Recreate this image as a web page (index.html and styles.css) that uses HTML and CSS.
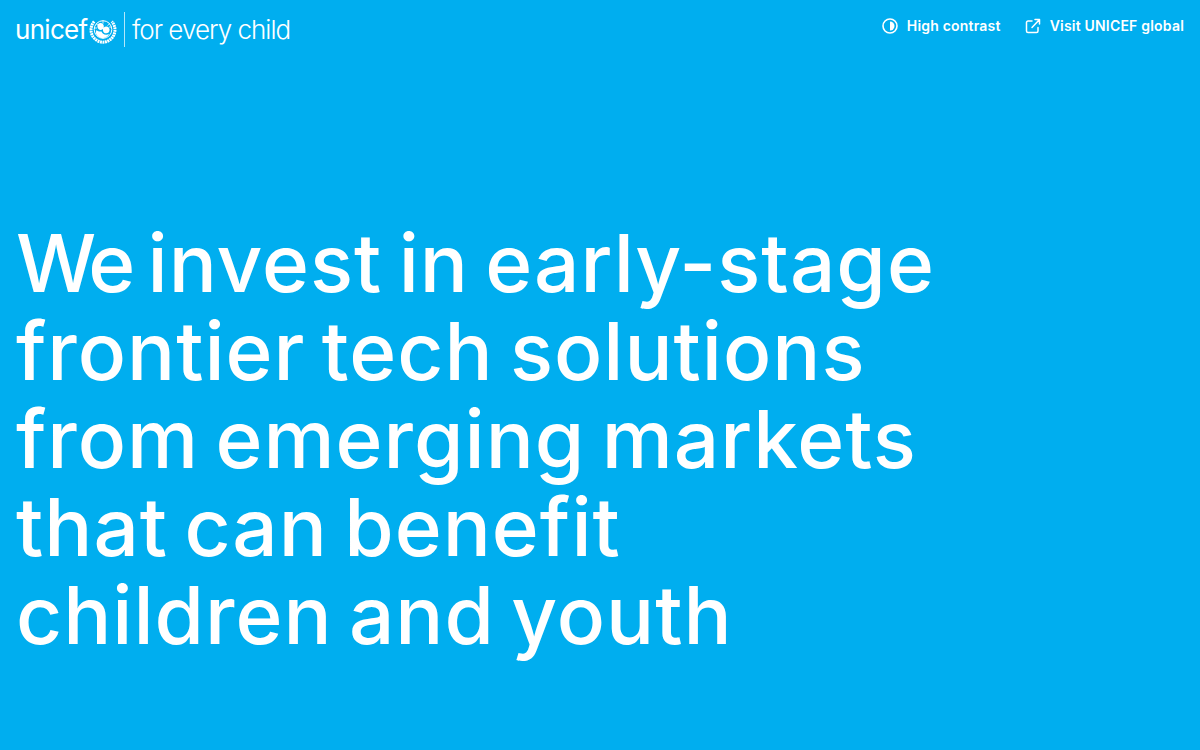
FILE: index.html
```html
<!DOCTYPE html>
<html lang="en">
<head>
<meta charset="utf-8">
<title>UNICEF Venture Fund</title>
<link rel="stylesheet" href="styles.css">
</head>
<body>
<header class="top">
  <a class="logo" href="#">
    <span class="wordmark">unicef</span>
    <svg class="emblem" viewBox="0 0 28 28" width="28" height="28" fill="none" stroke="#fff">
      <circle cx="14" cy="13.500" r="8.800" stroke-width="1"/>
      <path d="M14 4.700v3M14 20v2.500M5.500 12h2.500M20 11h2.500M7 7.500l2.500 2M21 7.500l-2.500 2" stroke-width=".8"/>
      <path d="M11.300 7c2.500 0 3.800 1.800 3.500 3.900-.3 2-1.900 3.200-3.600 3-1.800-.2-3-2-2.800-3.800.2-1.800 1.400-3.100 2.900-3.100zM17.200 10.500c2.100 0 3.500 1.600 3.400 3.500-.1 2-1.600 3.300-3.400 3.300s-3.300-1.400-3.300-3.400c0-1.900 1.400-3.400 3.300-3.400zM7.500 14c1.500 1.300 3.200 1.800 5 1.400.6 1.900 2.200 3.200 4.800 3.300 1 0 2-.2 2.800-.6-1.300 2.500-3.800 4-6.500 4-3.300 0-6-2.300-6.800-5.500z" fill="#fff" stroke="none"/>
      <path d="M5.200 5.500C1.200 9.800 1 16.800 4.500 21.300c2.300 3 5.900 4.900 9.500 4.900s7.200-1.900 9.500-4.900c3.500-4.500 3.300-11.500-.7-15.800" stroke-width="3" stroke-dasharray="1.900 .6"/>
    </svg>
    <span class="divider"></span>
    <span class="tagline">for every child</span>
  </a>
  <nav class="links">
    <a class="link" href="#">
      <svg viewBox="0 0 16 16" width="16" height="16"><circle cx="8" cy="8" r="7" fill="none" stroke="#fff" stroke-width="1.600"/><path d="M8 3.500a4.500 4.500 0 0 1 0 9z" fill="#fff"/></svg>
      High contrast
    </a>
    <a class="link" href="#">
      <svg viewBox="0 0 16 16" width="16" height="16" fill="none" stroke="#fff" stroke-width="1.500" stroke-linecap="round" stroke-linejoin="round"><path d="M7 3H3a1.500 1.500 0 0 0-1.500 1.500v8.500A1.500 1.500 0 0 0 3 14.500h8.500A1.500 1.500 0 0 0 13 13V9.500"/><path d="M7 9.500 14.500 1.500M10 1.500h4.500V6"/></svg>
      Visit UNICEF global
    </a>
  </nav>
</header>
<main class="hero">
  <h1><span class="kern-we">We</span> invest in early-stage<br>frontier tech solutions<br>from emerging markets<br>that can benefit<br>children and youth</h1>
</main>
</body>
</html>
```
FILE: styles.css
```css
* { box-sizing: border-box; }
html, body { margin: 0; height: 100%; }
body {
  background: #00aeef;
  color: #fff;
  font-family: "Inter", "Liberation Sans", sans-serif;
  overflow: hidden;
}
a { color: inherit; text-decoration: none; }
.top {
  display: flex;
  justify-content: space-between;
  align-items: flex-start;
  padding: 12px 16px 0;
}
.logo { display: flex; align-items: center; height: 35px; }
.wordmark {
  font-weight: 400;
  font-size: 26px;
  letter-spacing: -.7px;
  line-height: 35px;
  margin-left: -1px;
}
.emblem { margin-left: 1.500px; flex: none; }
.divider { width: 1px; height: 35px; background: rgba(255,255,255,.7); margin: 0 7px 0 7px; }
.tagline {
  font-weight: 300;
  font-size: 26px;
  letter-spacing: -1px;
  line-height: 35px;
}
.links { display: flex; gap: 24px; padding-top: 5px; }
.link {
  display: flex;
  align-items: center;
  gap: 9px;
  font-size: 14px;
  font-weight: 600;
  letter-spacing: .2px;
  line-height: 18px;
}
.hero { padding: 172px 16px 0; }
h1 {
  margin: 0;
  font-size: 80px;
  font-weight: 500;
  line-height: 88px;
  letter-spacing: 1px;
  word-spacing: -6px;
}
.kern-we { letter-spacing: -4px; }
```
